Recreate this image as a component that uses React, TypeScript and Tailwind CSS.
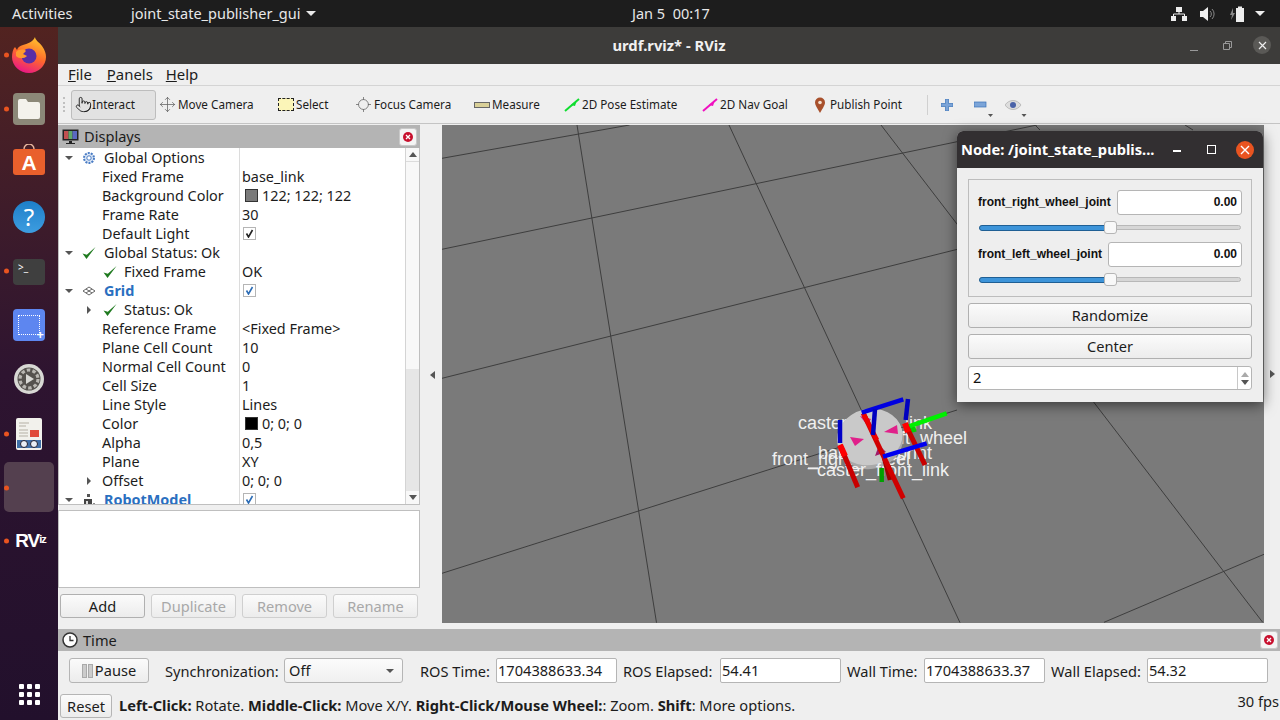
import { Pointer, Move, Locate } from 'lucide-react';

type Row = {
  name: string;
  value?: string;
  level?: number;
  arrow?: 'down' | 'right';
  icon?: 'gear' | 'check' | 'grid' | 'robot';
  swatch?: string;
  box?: 'dark' | 'blue';
  blue?: boolean;
};

const rows: Row[] = [
  { name: 'Global Options', arrow: 'down', icon: 'gear' },
  { name: 'Fixed Frame', value: 'base_link', level: 1 },
  { name: 'Background Color', value: '122; 122; 122', level: 1, swatch: '#7a7a7a' },
  { name: 'Frame Rate', value: '30', level: 1 },
  { name: 'Default Light', level: 1, box: 'dark' },
  { name: 'Global Status: Ok', arrow: 'down', icon: 'check' },
  { name: 'Fixed Frame', value: 'OK', level: 2, icon: 'check' },
  { name: 'Grid', arrow: 'down', icon: 'grid', box: 'blue', blue: true },
  { name: 'Status: Ok', level: 2, arrow: 'right', icon: 'check' },
  { name: 'Reference Frame', value: '<Fixed Frame>', level: 1 },
  { name: 'Plane Cell Count', value: '10', level: 1 },
  { name: 'Normal Cell Count', value: '0', level: 1 },
  { name: 'Cell Size', value: '1', level: 1 },
  { name: 'Line Style', value: 'Lines', level: 1 },
  { name: 'Color', value: '0; 0; 0', level: 1, swatch: '#000000' },
  { name: 'Alpha', value: '0,5', level: 1 },
  { name: 'Plane', value: 'XY', level: 1 },
  { name: 'Offset', value: '0; 0; 0', level: 1, arrow: 'right' },
  { name: 'RobotModel', arrow: 'down', icon: 'robot', box: 'blue', blue: true },
];

const gridLines = [
  [442, 158.3, 629.5, 125],
  [442, 249.3, 1037, 125],
  [442, 378.3, 957.4, 249.3],
  [442, 573.3, 957, 410],
  [1104, 622.3, 1264, 554.3],
  [577, 125, 656.5, 622.7],
  [729, 125, 960, 622.7],
  [881, 125, 1262.7, 622.3],
  [1185, 125, 1193, 130],
  [1035, 125, 1040, 130],
];

function Arrow({ dir }: { dir: 'down' | 'right' }) {
  return (
    <svg width="8" height="8" viewBox="0 0 8 8">
      {dir === 'down' ? <path d="M0 2h8L4 6z" fill="#555" /> : <path d="M2 0v8l4-4z" fill="#555" />}
    </svg>
  );
}

function TreeIcon({ kind }: { kind: Row['icon'] }) {
  if (kind === 'gear') {
    return (
      <svg width="14" height="14" viewBox="0 0 14 14">
        <circle cx="7" cy="7" r="5" fill="#dbe6f5" stroke="#4a7cc4" strokeWidth="2" strokeDasharray="2 1.1" />
        <circle cx="7" cy="7" r="2.2" fill="#fff" stroke="#4a7cc4" />
      </svg>
    );
  }
  if (kind === 'check') {
    return (
      <svg width="14" height="14" viewBox="0 0 14 14">
        <path d="M0.500 7.500l4 5.500L13.500 1 4.800 8.800z" fill="#1f7a1f" />
      </svg>
    );
  }
  if (kind === 'grid') {
    return (
      <svg width="14" height="10" viewBox="0 0 14 10" fill="none" stroke="#555" strokeWidth="0.9">
        <path d="M7 1l6 4-6 4-6-4zM4 3l6 4M10 3L4 7" />
      </svg>
    );
  }
  return (
    <svg width="14" height="14" viewBox="0 0 14 14">
      <rect x="5" y="1" width="3" height="3" fill="#555" />
      <rect x="2" y="6" width="8" height="7" fill="#444" />
      <rect x="4" y="8" width="2" height="3" fill="#ddd" />
      <path d="M11 10l2 0-1 3z" fill="#777" />
    </svg>
  );
}

function CheckBox({ color }: { color: 'dark' | 'blue' }) {
  return (
    <span className="flex h-[13px] w-[13px] items-center justify-center border border-[#b5b5b5] bg-white">
      <svg width="9" height="9" viewBox="0 0 9 9" fill="none" stroke={color === 'dark' ? '#222' : '#2c6cb5'} strokeWidth="1.6">
        <path d="M1.5 4.5l2 3.5L7.5 1" />
      </svg>
    </span>
  );
}

function TreeRow({ row }: { row: Row }) {
  const level = row.level || 0;
  return (
    <div className="flex h-[19px] shrink-0 items-center text-[14.4px]">
      <div className="relative flex h-full w-[181px] shrink-0 items-center border-r border-[#dcdcdc]">
        {row.arrow && (
          <span className={level === 0 ? 'ml-[6px]' : 'ml-[26px]'}>
            <Arrow dir={row.arrow} />
          </span>
        )}
        {row.icon && level === 0 && (
          <span className="ml-[9px] flex w-[14px] justify-center">
            <TreeIcon kind={row.icon} />
          </span>
        )}
        {level === 2 && (
          <span className={row.arrow ? 'ml-[10px]' : 'ml-[44px]'}>
            <TreeIcon kind={row.icon} />
          </span>
        )}
        <span
          className={
            (row.blue ? 'font-bold text-[#2a6fc0] ' : 'text-[#1c1c1c] ') +
            (level === 0 ? 'ml-[8px]' : level === 2 ? 'ml-[7px]' : row.arrow ? 'ml-[9px]' : 'ml-[43px]')
          }
        >
          {row.name}
        </span>
      </div>
      <div className="flex items-center pl-[2px] text-[#1c1c1c]">
        {row.swatch && <span className="ml-[3px] mr-[4px] h-[13px] w-[13px] border border-[#333]" style={{ background: row.swatch }} />}
        {row.box && (
          <span className="ml-[1px]">
            <CheckBox color={row.box} />
          </span>
        )}
        {row.value}
      </div>
    </div>
  );
}

function ToolItem({ icon, label, width, active }: { icon: React.ReactNode; label: string; width: string; active?: boolean }) {
  return (
    <div
      className={
        'flex h-[30px] items-center pl-[3px] text-[11.7px] text-[#1c1c1c] ' +
        width +
        (active ? ' gap-0 rounded-[3px] border border-[#bdbdbd] bg-[#e2e2e2]' : ' gap-[2px]')
      }
    >
      {icon}
      <span>{label}</span>
    </div>
  );
}

function QtButton({ label, disabled, width }: { label: string; disabled?: boolean; width: string }) {
  return (
    <div
      className={
        'flex h-[24px] items-center justify-center rounded-[3px] border bg-gradient-to-b from-[#fbfbfb] to-[#ececec] ' +
        width +
        (disabled ? ' border-[#cfcfcf] text-[#a8a8a8]' : ' border-[#b0b0b0] text-[#1c1c1c]')
      }
    >
      {label}
    </div>
  );
}

function CloseDot() {
  return (
    <span className="flex h-[18px] w-[18px] items-center justify-center rounded-[3px] border border-[#c9c9c9] bg-[#f4f4f4]">
      <svg width="12" height="12" viewBox="0 0 12 12">
        <circle cx="6" cy="6" r="5" fill="#c8102e" />
        <path d="M4 4l4 4M8 4l-4 4" stroke="#fff" strokeWidth="1.3" />
      </svg>
    </span>
  );
}

function TimeField({ value, width }: { value: string; width: string }) {
  return <div className={'flex h-[25px] items-center rounded-[2px] border border-[#b5b5b5] bg-white pl-[1px] text-[#1c1c1c] ' + width}>{value}</div>;
}

function JointSlider() {
  return (
    <div className="relative mx-[1px] h-[14px]">
      <div className="absolute left-0 right-0 top-[4px] h-[5px] rounded-full border border-[#b8b8b8] bg-[#d6d6d6]" />
      <div className="absolute left-0 top-[4px] h-[6px] w-[130px] rounded-full border border-[#1f5f94] bg-[#3d94d9]" />
      <div className="absolute left-[125px] top-0 h-[13px] w-[13px] rounded-[3px] border border-[#b5b5b5] bg-[#f8f8f8]" />
    </div>
  );
}

function Dot() {
  return <span className="absolute left-[4px] top-1/2 h-[5px] w-[5px] -translate-y-1/2 rounded-full bg-[#e95420]" />;
}

function DockSlot({ children, dot, h }: { children?: React.ReactNode; dot?: boolean; h: string }) {
  return (
    <div className={'relative flex w-full shrink-0 items-center justify-center ' + h}>
      {dot && <Dot />}
      {children}
    </div>
  );
}

function Dock() {
  return (
    <div className="flex w-[58px] shrink-0 flex-col bg-gradient-to-b from-[#522320] via-[#2e1430] to-[#22102c] pt-[1px]">
      <DockSlot dot h="h-[54px]">
        <svg width="34" height="36" viewBox="0 0 34 36">
          <defs>
            <linearGradient id="ffx" x1="0.7" y1="0" x2="0.3" y2="1">
              <stop offset="0" stopColor="#ffc52e" />
              <stop offset="0.5" stopColor="#ff6a2b" />
              <stop offset="1" stopColor="#e8138a" />
            </linearGradient>
          </defs>
          <path d="M23 0c0 3 4 5 7 9 3 4 4 8 4 11a17 16 0 0 1-34 0c0-4 1-8 3-10l2 3c1-3 3-4 6-5 4-1 10-3 12-8z" fill="url(#ffx)" />
          <circle cx="17" cy="19" r="7.500" fill="#5a2ea6" />
          <path d="M4 15c3-3 8-3 10-1l-3 3 4 2c-3 3-8 3-11 0z" fill="#ff9a2e" />
        </svg>
      </DockSlot>
      <DockSlot dot h="h-[54px]">
        <div className="flex h-[32px] w-[32px] items-center justify-center rounded-[4px] bg-[#8c8878]">
          <svg width="24" height="22" viewBox="0 0 24 22">
            <path d="M1 3a2 2 0 0 1 2-2h6l2 3h10a2 2 0 0 1 2 2v13a2 2 0 0 1-2 2H3a2 2 0 0 1-2-2z" fill="#f4f2ec" />
          </svg>
        </div>
      </DockSlot>
      <DockSlot h="h-[53px]">
        <svg className="mt-[-3px]" width="32" height="34" viewBox="0 0 32 34">
          <path d="M11 5a5 5 0 0 1 10 0" fill="none" stroke="#e8b79e" strokeWidth="1.4" />
          <rect x="0" y="5" width="32" height="26" rx="3" fill="#e9602c" />
          <text x="16" y="26" textAnchor="middle" fontSize="21" fontWeight="700" fill="#fff" className="font-['Liberation_Sans',sans-serif]">A</text>
        </svg>
      </DockSlot>
      <DockSlot h="h-[55px]">
        <div className="flex h-[32px] w-[32px] items-center justify-center rounded-full bg-gradient-to-b from-[#1d7fc9] to-[#3d9de0] text-[24px] leading-none text-white">?</div>
      </DockSlot>
      <DockSlot dot h="h-[54px]">
        <div className="mt-[1px] h-[26px] w-[32px] rounded-[4px] bg-[#3f3f3f] pl-[5px] pt-[1px] text-[10px] leading-[14px] text-white">&gt;_</div>
      </DockSlot>
      <DockSlot h="h-[54px]">
        <div className="relative h-[32px] w-[32px] rounded-[4px] bg-[#5d86f0]">
          <div className="absolute left-[5px] top-[6px] h-[20px] w-[22px] border border-dotted border-white" />
          <span className="absolute bottom-0 right-[1px] text-[13px] font-bold leading-[13px] text-white">+</span>
        </div>
      </DockSlot>
      <DockSlot h="h-[54px]">
        <svg width="32" height="32" viewBox="0 0 32 32">
          <circle cx="16" cy="16" r="15" fill="#d8d8d4" />
          <circle cx="16" cy="16" r="11.500" fill="#55524e" />
          <circle cx="16" cy="16" r="9" fill="none" stroke="#b9b7b2" strokeWidth="3.2" strokeDasharray="3.5 2.2" />
          <path d="M13 11l8 5-8 5z" fill="#d8d8d4" />
        </svg>
      </DockSlot>
      <DockSlot dot h="h-[55px]">
        <svg width="26" height="32" viewBox="0 0 26 32">
          <rect x="0" y="0" width="26" height="32" rx="2" fill="#f2f1ec" />
          <path d="M3 5h10M3 8h7M3 12h9M3 15h9M3 18h9" stroke="#b5b0a5" strokeWidth="1" />
          <rect x="14" y="12" width="9" height="7" fill="#e04a3a" />
          <rect x="1" y="22" width="24" height="8" fill="#3f6fa8" />
          <circle cx="8" cy="26" r="3.500" fill="#e8eef5" stroke="#223" />
          <circle cx="18" cy="26" r="3.500" fill="#e8eef5" stroke="#223" />
        </svg>
      </DockSlot>
      <DockSlot h="h-[51px] mt-[1px]">
        <div className="absolute left-[4px] top-0 h-[50px] w-[50px] rounded-[5px] bg-[#54404f]" />
        <Dot />
      </DockSlot>
      <DockSlot dot h="h-[55px]">
        <span className="ml-[3px] flex items-start font-['Liberation_Sans',sans-serif] text-[19px] font-bold leading-none tracking-[-1px] text-white">
          RV<span className="mt-[3px] text-[11px]">iz</span>
        </span>
      </DockSlot>
      <div className="mt-auto mb-[15px] grid grid-cols-3 justify-center gap-x-[3px] gap-y-[3px] self-center">
        {[0, 1, 2, 3, 4, 5, 6, 7, 8].map((i) => (
          <span key={i} className="h-[5px] w-[5px] rounded-[1px] bg-white" />
        ))}
      </div>
    </div>
  );
}

function Scene() {
  return (
    <svg viewBox="442 125 822 498" className="block h-[498px] w-[822px]">
      <rect x="442" y="125" width="822" height="498" fill="#7a7a7a" />
      {gridLines.map((l, i) => (
        <line key={i} x1={l[0]} y1={l[1]} x2={l[2]} y2={l[3]} stroke="#3e3e3e" strokeWidth="1" />
      ))}
      <g fontSize="18" fill="#f0f0f0" className="font-['Liberation_Sans',sans-serif]">
        <text x="798" y="429">caster_back_link</text>
        <text x="840" y="444">front_left_wheel</text>
        <text x="818" y="459">base_footprint</text>
        <text x="772" y="465">front_right_wheel</text>
      </g>
      <g transform="rotate(-14 870 438)">
        <ellipse cx="870" cy="440" rx="33" ry="29" fill="#a9a9a9" />
        <ellipse cx="870" cy="437" rx="33" ry="28" fill="#c9c9c9" />
      </g>
      <g fontSize="18" fill="#f0f0f0" className="font-['Liberation_Sans',sans-serif]">
        <text x="817" y="476">caster_front_link</text>
      </g>
      <line x1="808" y1="468" x2="818" y2="468" stroke="#f0f0f0" strokeWidth="1.2" />
      <polygon points="850,437 864,439 855,446" fill="#e0208a" />
      <polygon points="884,432 897,425 898,434" fill="#e0208a" />
      <polygon points="860,416 871,419 867,425" fill="#d01e80" />
      <polygon points="875,456 886,452 879,445" fill="#a01a68" />
      <g strokeWidth="4.500" fill="none">
        <line x1="881.7" y1="468" x2="881.7" y2="482" stroke="#00a000" />
        <line x1="908.3" y1="426.7" x2="946.7" y2="413.3" stroke="#00f000" />
        <line x1="908" y1="431" x2="916" y2="429" stroke="#00d000" strokeWidth="5" />
        <line x1="884" y1="458" x2="890" y2="480" stroke="#a00000" />
        <line x1="840" y1="445" x2="857.7" y2="487.3" stroke="#c80000" strokeWidth="5" />
        <line x1="905" y1="423.3" x2="925" y2="465" stroke="#c80000" strokeWidth="5" />
        <line x1="863.3" y1="413.3" x2="903.3" y2="498.3" stroke="#d00000" strokeWidth="5" />
        <line x1="863.3" y1="413.3" x2="877" y2="440" stroke="#ee0000" />
        <line x1="840" y1="445" x2="845" y2="456" stroke="#ff0000" strokeWidth="6" />
        <line x1="905" y1="423.3" x2="908" y2="432" stroke="#ff0000" strokeWidth="6" />
        <line x1="861.7" y1="412.7" x2="903.3" y2="399.3" stroke="#0000e0" />
        <line x1="875" y1="409" x2="873" y2="435" stroke="#0000c0" />
        <line x1="908" y1="399" x2="905.7" y2="420" stroke="#0000c0" />
        <line x1="840" y1="420" x2="840" y2="443" stroke="#0000c8" />
        <line x1="883" y1="456.7" x2="926.7" y2="443.3" stroke="#0000f0" />
      </g>
    </svg>
  );
}

function JointWindow() {
  return (
    <div className="absolute left-[957px] top-[131px] flex h-[271px] w-[306px] flex-col rounded-t-[6px] bg-[#eeeeee] shadow-[0_3px_14px_rgba(0,0,0,0.55)]">
      <div className="flex h-[37px] shrink-0 items-center rounded-t-[6px] bg-[#322f31] pl-[4px] text-white">
        <span className="w-[212px] whitespace-nowrap text-[14.7px] font-bold">Node: /joint_state_publis...</span>
        <span className="mt-[3px] h-[1.5px] w-[8px] bg-white" />
        <span className="ml-[26px] h-[9px] w-[9px] border border-white" />
        <span className="ml-[20px] flex h-[18px] w-[18px] items-center justify-center rounded-full bg-[#e95420]">
          <svg width="10" height="10" viewBox="0 0 10 10" stroke="#fff" strokeWidth="1.4">
            <path d="M1 1l8 8M9 1l-8 8" />
          </svg>
        </span>
      </div>
      <div className="flex flex-col gap-[6px] px-[11px] pt-[11px]">
        <div className="flex h-[118px] flex-col border border-[#bdbdbd] px-[9px] pt-[10px] font-['Liberation_Sans',sans-serif] text-[12px] font-bold text-[#111]">
          <div className="flex h-[24px] items-center justify-between">
            <span>front_right_wheel_joint</span>
            <span className="flex h-[25px] w-[125px] items-center justify-end rounded-[3px] border border-[#b5b5b5] bg-white pr-[4px]">0.00</span>
          </div>
          <div className="mt-[7px]">
            <JointSlider />
          </div>
          <div className="mt-[7px] flex h-[24px] items-center justify-between">
            <span>front_left_wheel_joint</span>
            <span className="flex h-[25px] w-[134px] items-center justify-end rounded-[3px] border border-[#b5b5b5] bg-white pr-[4px]">0.00</span>
          </div>
          <div className="mt-[7px]">
            <JointSlider />
          </div>
        </div>
        <QtButton label="Randomize" width="w-full h-[25px]" />
        <QtButton label="Center" width="w-full h-[25px]" />
        <div className="mt-[1px] flex h-[24px] items-center rounded-[3px] border border-[#b5b5b5] bg-white pl-[4px] text-[#111]">
          <span className="flex-1">2</span>
          <span className="flex h-full w-[14px] flex-col items-center justify-center gap-[3px] border-l border-[#c8c8c8]">
            <svg width="8" height="5" viewBox="0 0 8 5"><path d="M0 5h8L4 0z" fill="#aaa" /></svg>
            <svg width="8" height="5" viewBox="0 0 8 5"><path d="M0 0h8L4 5z" fill="#555" /></svg>
          </span>
        </div>
      </div>
    </div>
  );
}

export default function App() {
  return (
    <div className="relative flex h-[720px] w-[1280px] flex-col overflow-hidden bg-[#efefef] font-['Noto_Sans',sans-serif] text-[14.6px]">
      {/* gnome top bar */}
      <div className="flex h-[27px] shrink-0 items-center bg-[#1d1d1d] text-[14.5px] text-[#e8e8e8]">
        <span className="ml-[12px] w-[119px]">Activities</span>
        <span className="w-[170px] whitespace-nowrap">joint_state_publisher_gui</span>
        <svg className="ml-[5px]" width="10" height="5" viewBox="0 0 10 5"><path d="M0 0h10L5 5z" fill="#e8e8e8" /></svg>
        <span className="ml-[316px]">Jan 5&nbsp;&nbsp;00:17</span>
        <div className="ml-auto mr-[15px] flex items-center">
          <svg width="16" height="14" viewBox="0 0 16 14" fill="#eee">
            <rect x="5" y="0" width="6" height="5" />
            <rect x="0" y="9" width="5" height="5" />
            <rect x="11" y="9" width="5" height="5" />
            <path d="M8 5v2M2.500 9V7h11v2" fill="none" stroke="#eee" />
          </svg>
          <svg className="ml-[13px]" width="15" height="14" viewBox="0 0 15 14">
            <path d="M0 4h3l5-4v14l-5-4H0z" fill="#eee" />
            <path d="M10 4a4 4 0 0 1 0 6M12 2a7 7 0 0 1 0 10" fill="none" stroke="#888" />
          </svg>
          <svg className="ml-[14px]" width="16" height="16" viewBox="0 0 16 16">
            <path d="M4 2L1 9h2l-1 5 4-7H4z" fill="#888" />
            <rect x="7.500" y="2.500" width="7" height="13" fill="#eee" stroke="#eee" />
            <rect x="9" y="0.500" width="4" height="2" fill="#eee" />
          </svg>
          <svg className="ml-[10px]" width="10" height="5" viewBox="0 0 10 5"><path d="M0 0h10L5 5z" fill="#eee" /></svg>
        </div>
      </div>

      <div className="flex min-h-0 flex-1">
        <Dock />

        <div className="flex min-w-0 flex-1 flex-col">
          {/* rviz window title */}
          <div className="relative flex h-[37px] shrink-0 items-center justify-center bg-[#3d3c3a] text-[14.8px] font-bold text-[#f0f0f0]">
            urdf.rviz* - RViz
            <div className="absolute right-[9px] top-[9px] flex items-center">
              <span className="mr-[25px] mt-[10px] h-[1px] w-[8px] bg-[#999]" />
              <svg className="mr-[21px]" width="9" height="9" viewBox="0 0 9 9" fill="none" stroke="#999">
                <path d="M0.500 2.500h6v6h-6zM2.500 2V0.500h6v6H7" />
              </svg>
              <span className="flex h-[18px] w-[18px] items-center justify-center rounded-full bg-[#5a5956]">
                <svg width="9" height="9" viewBox="0 0 9 9" stroke="#eee" strokeWidth="1.2"><path d="M1 1l7 7M8 1l-7 7" /></svg>
              </span>
            </div>
          </div>

          {/* menu */}
          <div className="flex h-[22px] shrink-0 items-center border-b border-[#d4d4d4] pb-[1px] pl-[10px] text-[14.9px] text-[#1c1c1c]">
            <span className="mr-[15px]"><u>F</u>ile</span>
            <span className="mr-[13px]"><u>P</u>anels</span>
            <span><u>H</u>elp</span>
          </div>

          {/* toolbar */}
          <div className="flex h-[38px] shrink-0 items-center border-b border-[#c4c4c4] pl-[5px]">
            <span className="mr-[5px] h-[15px] w-[3px] border-l-2 border-dotted border-[#c0c0c0]" />
            <ToolItem active width="w-[85px]" label="Interact" icon={<Pointer size={17} strokeWidth={1.3} />} />
            <ToolItem width="w-[119px]" label="Move Camera" icon={<Move size={17} strokeWidth={1.1} color="#666" />} />
            <ToolItem width="w-[77px]" label="Select" icon={<span className="h-[13px] w-[16px] border border-dashed border-[#222] bg-[#fbf5b8]" />} />
            <ToolItem width="w-[119px]" label="Focus Camera" icon={<Locate size={17} strokeWidth={1.1} color="#666" />} />
            <ToolItem width="w-[90px]" label="Measure" icon={<span className="h-[6px] w-[16px] border border-[#666] bg-[#d9d098]" />} />
            <ToolItem
              width="w-[138px]"
              label="2D Pose Estimate"
              icon={<svg width="16" height="14" viewBox="0 0 16 14"><path d="M1 13L15 1" stroke="#10dd30" strokeWidth="2" /><path d="M7 7l6-5-2 6z" fill="#10dd30" /></svg>}
            />
            <ToolItem
              width="w-[112px]"
              label="2D Nav Goal"
              icon={<svg width="16" height="14" viewBox="0 0 16 14"><path d="M1 13L15 1" stroke="#f010c0" strokeWidth="2" /><path d="M7 7l6-5-2 6z" fill="#f010c0" /></svg>}
            />
            <ToolItem
              width="w-[105px]"
              label="Publish Point"
              icon={<svg className="mr-[2px]" width="12" height="16" viewBox="0 0 12 16"><path d="M6 16C3 11 1 8 1 5.500a5 5 0 0 1 10 0C11 8 9 11 6 16z" fill="#a8502c" /><circle cx="6" cy="5.500" r="1.800" fill="#f5e0d0" /></svg>}
            />
            <span className="ml-[11px] mr-[13px] h-[20px] w-[1px] bg-[#d0d0d0]" />
            <svg width="12" height="12" viewBox="0 0 12 12"><path d="M4.500 0h3v4.500h4.500v3h-4.500v4.500h-3v-4.500H0v-3h4.500z" fill="#7ba4d8" stroke="#3a72b8" strokeWidth="0.7" /></svg>
            <svg className="ml-[21px]" width="20" height="26" viewBox="0 0 20 26">
              <rect y="10" width="12" height="5" fill="#7ba4d8" stroke="#3a72b8" strokeWidth="0.7" />
              <path d="M14 22h5l-2.500 3z" fill="#555" />
            </svg>
            <svg className="ml-[11px]" width="24" height="26" viewBox="0 0 24 26">
              <path d="M0 13c4-6 12-6 16 0-4 6-12 6-16 0z" fill="#ddd" stroke="#aaa" strokeWidth="0.7" />
              <circle cx="8" cy="13" r="3" fill="#4a62a8" />
              <path d="M16.500 22h5L19 25z" fill="#555" />
            </svg>
          </div>

          {/* main */}
          <div className="mt-[1px] flex h-[498px] shrink-0">
            <div className="flex w-[362px] shrink-0 flex-col">
              <div className="flex h-[23px] shrink-0 items-center gap-[5px] bg-[#b4b4b4] pl-[4px] pr-[3px] text-[#1c1c1c]">
                <svg width="17" height="16" viewBox="0 0 17 16">
                  <rect x="0.500" y="0.500" width="16" height="11" fill="#222" />
                  <rect x="2" y="2" width="4.500" height="8" fill="#c25050" />
                  <rect x="6.500" y="2" width="4" height="8" fill="#60a868" />
                  <rect x="10.500" y="2" width="4.500" height="8" fill="#5a68c0" />
                  <path d="M7 12h3v2h3v1H4v-1h3z" fill="#222" />
                </svg>
                <span className="flex-1">Displays</span>
                <CloseDot />
              </div>
              <div className="flex h-[357px] shrink-0 border border-t-0 border-[#bfbfbf] bg-white">
                <div className="flex min-w-0 flex-1 flex-col overflow-hidden">
                  {rows.map((row, i) => (
                    <TreeRow key={i} row={row} />
                  ))}
                </div>
                <div className="flex w-[14px] shrink-0 flex-col border-l border-[#d4d4d4] bg-[#f8f8f8]">
                  <div className="flex h-[14px] shrink-0 items-center justify-center border-b border-[#dcdcdc]">
                    <svg width="8" height="5" viewBox="0 0 8 5"><path d="M0 5h8L4 0z" fill="#555" /></svg>
                  </div>
                  <div className="flex-1" />
                  <div className="h-[122px] bg-[#e6e6e6]" />
                  <div className="flex h-[13px] shrink-0 items-center justify-center">
                    <svg width="8" height="5" viewBox="0 0 8 5"><path d="M0 0h8L4 5z" fill="#555" /></svg>
                  </div>
                </div>
              </div>
              <div className="h-[5px] shrink-0" />
              <div className="h-[78px] shrink-0 border border-[#bfbfbf] bg-white" />
              <div className="flex gap-[6px] pl-[2px] pt-[6px]">
                <QtButton label="Add" width="w-[85px] pt-[1px]" />
                <QtButton label="Duplicate" disabled width="w-[85px] pt-[1px]" />
                <QtButton label="Remove" disabled width="w-[85px] pt-[1px]" />
                <QtButton label="Rename" disabled width="w-[85px] pt-[1px]" />
              </div>
            </div>
            <div className="flex w-[22px] shrink-0 items-center justify-center">
              <svg className="mb-[-1px] ml-[3px]" width="5" height="8" viewBox="0 0 5 8"><path d="M5 0v8L0 4z" fill="#555" /></svg>
            </div>
            <Scene />
            <div className="flex flex-1 items-center justify-center">
              <svg width="5" height="8" viewBox="0 0 5 8"><path d="M0 0v8l5-4z" fill="#555" /></svg>
            </div>
          </div>

          {/* time panel */}
          <div className="mt-[6px] flex h-[22px] shrink-0 items-center gap-[5px] bg-[#b4b4b4] pl-[4px] pr-[2px] text-[#1c1c1c]">
            <svg width="16" height="16" viewBox="0 0 16 16" fill="none">
              <circle cx="8" cy="8" r="7" fill="#fff" stroke="#333" strokeWidth="1.5" />
              <path d="M8 4v4.500h3.500" stroke="#333" strokeWidth="1.3" />
            </svg>
            <span className="flex-1 pt-[1px]">Time</span>
            <CloseDot />
          </div>
          <div className="flex h-[39px] shrink-0 items-center pl-[11px]">
            <div className="flex h-[25px] w-[80px] items-center justify-center gap-[1px] rounded-[3px] border border-[#b5b5b5] bg-gradient-to-b from-[#fbfbfb] to-[#ececec] text-[#1c1c1c]">
              <span className="h-[14px] w-[5px] border border-[#aaa] bg-[#ccc]" />
              <span className="mr-[1px] h-[14px] w-[5px] border border-[#aaa] bg-[#ccc]" />
              Pause
            </div>
            <span className="ml-[16px] w-[119px] whitespace-nowrap pt-[2px] text-[#1c1c1c]">Synchronization:</span>
            <div className="flex h-[25px] w-[119px] items-center justify-between rounded-[3px] border border-[#b5b5b5] bg-gradient-to-b from-[#fbfbfb] to-[#f0f0f0] pl-[4px] pr-[8px] text-[#1c1c1c]">
              Off
              <svg width="8" height="4" viewBox="0 0 8 4"><path d="M0 0h8L4 4z" fill="#555" /></svg>
            </div>
            <span className="ml-[17px] w-[76px] whitespace-nowrap pt-[2px] text-[#1c1c1c]">ROS Time:</span>
            <TimeField value="1704388633.34" width="w-[121px]" />
            <span className="ml-[6px] w-[90px] whitespace-nowrap pt-[2px] text-[#1c1c1c]">ROS Elapsed:</span>
            <TimeField value="54.41" width="w-[121px] ml-[7px]" />
            <span className="ml-[6px] w-[77px] whitespace-nowrap pt-[2px] text-[#1c1c1c]">Wall Time:</span>
            <TimeField value="1704388633.37" width="w-[121px]" />
            <span className="ml-[6px] w-[96px] whitespace-nowrap pt-[2px] text-[#1c1c1c]">Wall Elapsed:</span>
            <TimeField value="54.32" width="w-[121px]" />
          </div>

          {/* status bar */}
          <div className="flex h-[30px] shrink-0 items-center pl-[2px] text-[14.65px] text-[#1c1c1c]">
            <div className="mt-[2px] flex h-[24px] w-[52px] items-center justify-center rounded-[3px] border border-[#b5b5b5] bg-gradient-to-b from-[#fbfbfb] to-[#ececec] pt-[1px]">Reset</div>
            <span className="ml-[7px] mt-[1px] flex-1">
              <b>Left-Click:</b> Rotate. <b>Middle-Click:</b> Move X/Y. <b>Right-Click/Mouse Wheel:</b>: Zoom. <b>Shift</b>: More options.
            </span>
            <span className="mb-[6px] mr-[1px]">30 fps</span>
          </div>
        </div>
      </div>

      <JointWindow />
    </div>
  );
}
